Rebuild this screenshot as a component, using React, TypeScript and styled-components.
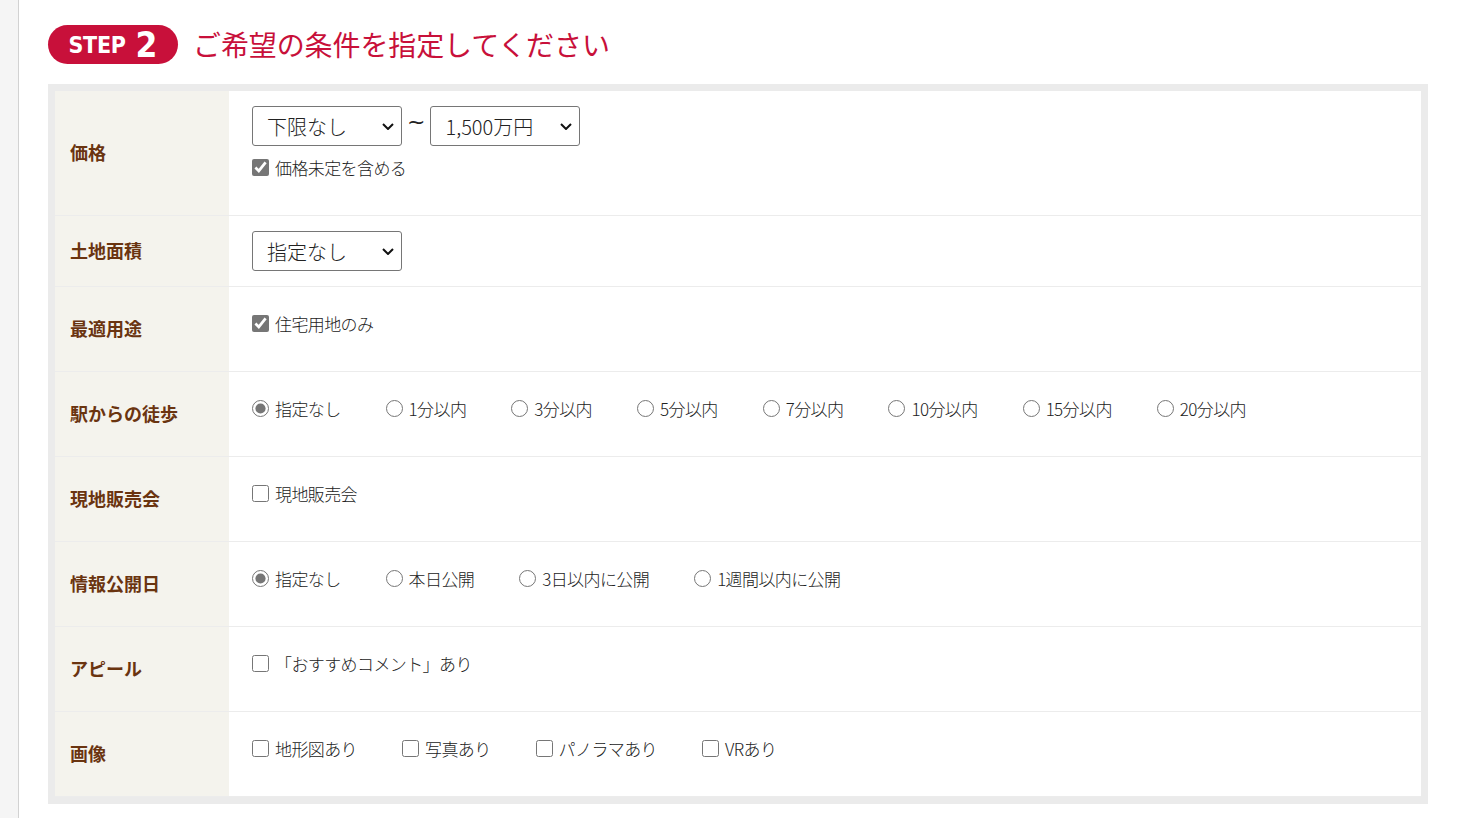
import React from "react";
import styled, { createGlobalStyle } from "styled-components";

const GlobalStyle = createGlobalStyle`
  html, body { margin: 0; padding: 0; background: #ffffff; }
  body {
    font-family: "Noto Sans CJK JP", "Noto Sans", sans-serif;
    color: #222;
  }
`;

const Page = styled.div`
  display: flex;
  min-height: 818px;
`;

const SideRail = styled.div`
  width: 18px;
  flex: 0 0 18px;
  background: #f5f5f5;
  border-right: 1px solid #d2d2d2;
`;

const Main = styled.main`
  padding: 25px 0 0 29px;
  width: 1380px;
`;

const Heading = styled.div`
  display: flex;
  align-items: center;
  gap: 15px;
  height: 39px;
`;

const Badge = styled.div`
  width: 130px;
  height: 39px;
  border-radius: 20px;
  background: #c8103a;
  color: #fff;
  display: flex;
  align-items: center;
  justify-content: center;
  gap: 10px;
  font-family: "DejaVu Sans Condensed", "Liberation Sans", sans-serif;
  font-weight: bold;
  padding-top: 1px;
  box-sizing: border-box;
`;

const BadgeWord = styled.span`
  font-size: 23px;
  letter-spacing: -0.3px;
  line-height: 1;
`;

const BadgeNum = styled.span`
  font-size: 35px;
  line-height: 1;
`;

const Title = styled.h2`
  margin: 0;
  color: #c8103a;
  font-size: 28px;
  font-weight: 400;
  line-height: 39px;
  letter-spacing: -0.1px;
`;

const Frame = styled.div`
  margin-top: 20px;
  border: 7px solid #ebebeb;
  background: #fff;
`;

const Row = styled.div`
  display: grid;
  grid-template-columns: 174px 1fr;
  border-bottom: 1px solid #ececec;
`;

const Label = styled.div`
  background: #f4f3ed;
  display: flex;
  align-items: center;
  padding: 0 15px 3px;
  font-size: 18px;
  font-weight: bold;
  color: #6a3410;
`;

const Value = styled.div`
  padding: 15px 23px;
`;

const SelectGroup = styled.div`
  display: flex;
  align-items: center;
  gap: 5px;
`;

const SelectWrap = styled.span`
  position: relative;
  display: inline-block;
`;

const Select = styled.select`
  appearance: none;
  -webkit-appearance: none;
  width: 150px;
  height: 40px;
  border: 1px solid #767676;
  border-radius: 3px;
  background: #fff;
  padding: 0 14px;
  font-family: "Noto Sans CJK JP", sans-serif;
  font-size: 20px;
  font-weight: 300;
  color: #222;
  display: block;
`;

const Chevron = styled.svg`
  position: absolute;
  right: 8px;
  top: 50%;
  margin-top: -3px;
  pointer-events: none;
`;

const Tilde = styled.span`
  font-family: "DejaVu Sans", sans-serif;
  font-size: 22px;
  color: #222;
  line-height: 1;
  margin-top: -8px;
`;

const OptionLine = styled.div`
  display: flex;
  align-items: center;
  height: 24px;
  margin: 9px 0 21px;
`;

const Option = styled.label`
  display: inline-flex;
  align-items: center;
  gap: 6px;
  margin-right: 45px;
  font-size: 17px;
  font-weight: 300;
  color: #222;
  white-space: nowrap;
  letter-spacing: -0.6px;
`;

const Check = styled.input`
  width: 17px;
  height: 17px;
  margin: 0;
  accent-color: #767676;
`;

function Dropdown({ value, options }: { value: string; options: string[] }) {
  return (
    <SelectWrap>
      <Select defaultValue={value}>
        {options.map((o) => (
          <option key={o}>{o}</option>
        ))}
      </Select>
      <Chevron width="12" height="7" viewBox="0 0 12 7">
        <polyline points="1,1 6,6 11,1" fill="none" stroke="#111" strokeWidth="2" />
      </Chevron>
    </SelectWrap>
  );
}

type Opt = { text: string; checked?: boolean };

function Options({ type, name, items }: { type: "radio" | "checkbox"; name: string; items: Opt[] }) {
  return (
    <OptionLine>
      {items.map((it) => (
        <Option key={it.text}>
          <Check type={type} name={name} defaultChecked={!!it.checked} />
          {it.text}
        </Option>
      ))}
    </OptionLine>
  );
}

export default function App() {
  return (
    <>
      <GlobalStyle />
      <Page>
        <SideRail />
        <Main>
          <Heading>
            <Badge>
              <BadgeWord>STEP</BadgeWord>
              <BadgeNum>2</BadgeNum>
            </Badge>
            <Title>ご希望の条件を指定してください</Title>
          </Heading>
          <Frame>
            <Row>
              <Label>価格</Label>
              <Value>
                <SelectGroup>
                  <Dropdown value="下限なし" options={["下限なし", "500万円", "1,000万円"]} />
                  <Tilde>~</Tilde>
                  <Dropdown value="1,500万円" options={["上限なし", "1,000万円", "1,500万円"]} />
                </SelectGroup>
                <Options type="checkbox" name="price" items={[{ text: "価格未定を含める", checked: true }]} />
              </Value>
            </Row>
            <Row>
              <Label>土地面積</Label>
              <Value>
                <Dropdown value="指定なし" options={["指定なし", "50㎡以上", "100㎡以上"]} />
              </Value>
            </Row>
            <Row>
              <Label>最適用途</Label>
              <Value>
                <Options type="checkbox" name="use" items={[{ text: "住宅用地のみ", checked: true }]} />
              </Value>
            </Row>
            <Row>
              <Label>駅からの徒歩</Label>
              <Value>
                <Options
                  type="radio"
                  name="walk"
                  items={[
                    { text: "指定なし", checked: true },
                    { text: "1分以内" },
                    { text: "3分以内" },
                    { text: "5分以内" },
                    { text: "7分以内" },
                    { text: "10分以内" },
                    { text: "15分以内" },
                    { text: "20分以内" },
                  ]}
                />
              </Value>
            </Row>
            <Row>
              <Label>現地販売会</Label>
              <Value>
                <Options type="checkbox" name="sale" items={[{ text: "現地販売会" }]} />
              </Value>
            </Row>
            <Row>
              <Label>情報公開日</Label>
              <Value>
                <Options
                  type="radio"
                  name="pub"
                  items={[
                    { text: "指定なし", checked: true },
                    { text: "本日公開" },
                    { text: "3日以内に公開" },
                    { text: "1週間以内に公開" },
                  ]}
                />
              </Value>
            </Row>
            <Row>
              <Label>アピール</Label>
              <Value>
                <Options type="checkbox" name="appeal" items={[{ text: "「おすすめコメント」あり" }]} />
              </Value>
            </Row>
            <Row>
              <Label>画像</Label>
              <Value>
                <Options
                  type="checkbox"
                  name="img"
                  items={[
                    { text: "地形図あり" },
                    { text: "写真あり" },
                    { text: "パノラマあり" },
                    { text: "VRあり" },
                  ]}
                />
              </Value>
            </Row>
          </Frame>
        </Main>
      </Page>
    </>
  );
}
